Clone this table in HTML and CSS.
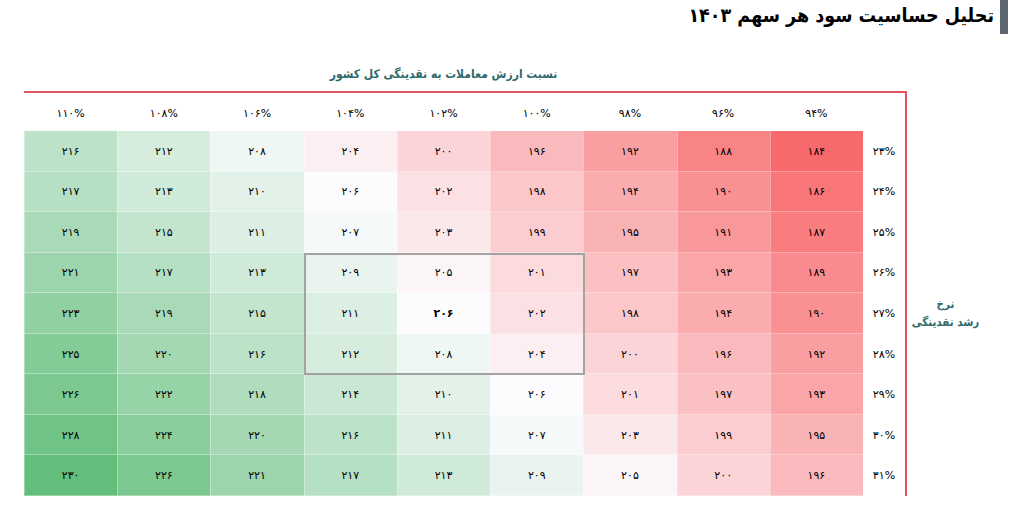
FILE: index.html
```html
<!DOCTYPE html>
<html lang="fa" dir="rtl">
<head>
<meta charset="utf-8">
<title>تحلیل حساسیت سود هر سهم ۱۴۰۳</title>
<link rel="stylesheet" href="styles.css">
</head>
<body>
<header class="page-head">
  <span class="head-bar"></span>
  <h1 class="page-title">تحلیل حساسیت سود هر سهم ۱۴۰۳</h1>
</header>
<main class="sens">
  <div class="axis-y"><span>نرخ</span><span>رشد نقدینگی</span></div>
  <section class="table-wrap">
    <h2 class="axis-x">نسبت ارزش معاملات به نقدینگی کل کشور</h2>
    <div class="grid">
      <div class="corner"></div>
      <div class="colh">۹۴%</div><div class="colh">۹۶%</div><div class="colh">۹۸%</div><div class="colh">۱۰۰%</div><div class="colh">۱۰۲%</div><div class="colh">۱۰۴%</div><div class="colh">۱۰۶%</div><div class="colh">۱۰۸%</div><div class="colh">۱۱۰%</div>

      <div class="rowh">۲۳%</div>
      <div class="cell" data-v="184">۱۸۴</div><div class="cell" data-v="188">۱۸۸</div><div class="cell" data-v="192">۱۹۲</div><div class="cell" data-v="196">۱۹۶</div><div class="cell" data-v="200">۲۰۰</div><div class="cell" data-v="204">۲۰۴</div><div class="cell" data-v="208">۲۰۸</div><div class="cell" data-v="212">۲۱۲</div><div class="cell" data-v="216">۲۱۶</div>

      <div class="rowh">۲۴%</div>
      <div class="cell" data-v="186">۱۸۶</div><div class="cell" data-v="190">۱۹۰</div><div class="cell" data-v="194">۱۹۴</div><div class="cell" data-v="198">۱۹۸</div><div class="cell" data-v="202">۲۰۲</div><div class="cell" data-v="206">۲۰۶</div><div class="cell" data-v="210">۲۱۰</div><div class="cell" data-v="213">۲۱۳</div><div class="cell" data-v="217">۲۱۷</div>

      <div class="rowh">۲۵%</div>
      <div class="cell" data-v="187">۱۸۷</div><div class="cell" data-v="191">۱۹۱</div><div class="cell" data-v="195">۱۹۵</div><div class="cell" data-v="199">۱۹۹</div><div class="cell" data-v="203">۲۰۳</div><div class="cell" data-v="207">۲۰۷</div><div class="cell" data-v="211">۲۱۱</div><div class="cell" data-v="215">۲۱۵</div><div class="cell" data-v="219">۲۱۹</div>

      <div class="rowh">۲۶%</div>
      <div class="cell" data-v="189">۱۸۹</div><div class="cell" data-v="193">۱۹۳</div><div class="cell" data-v="197">۱۹۷</div><div class="cell" data-v="201">۲۰۱</div><div class="cell" data-v="205">۲۰۵</div><div class="cell" data-v="209">۲۰۹</div><div class="cell" data-v="213">۲۱۳</div><div class="cell" data-v="217">۲۱۷</div><div class="cell" data-v="221">۲۲۱</div>

      <div class="rowh">۲۷%</div>
      <div class="cell" data-v="190">۱۹۰</div><div class="cell" data-v="194">۱۹۴</div><div class="cell" data-v="198">۱۹۸</div><div class="cell" data-v="202">۲۰۲</div><div class="cell base" data-v="206">۲۰۶</div><div class="cell" data-v="211">۲۱۱</div><div class="cell" data-v="215">۲۱۵</div><div class="cell" data-v="219">۲۱۹</div><div class="cell" data-v="223">۲۲۳</div>

      <div class="rowh">۲۸%</div>
      <div class="cell" data-v="192">۱۹۲</div><div class="cell" data-v="196">۱۹۶</div><div class="cell" data-v="200">۲۰۰</div><div class="cell" data-v="204">۲۰۴</div><div class="cell" data-v="208">۲۰۸</div><div class="cell" data-v="212">۲۱۲</div><div class="cell" data-v="216">۲۱۶</div><div class="cell" data-v="220">۲۲۰</div><div class="cell" data-v="225">۲۲۵</div>

      <div class="rowh">۲۹%</div>
      <div class="cell" data-v="193">۱۹۳</div><div class="cell" data-v="197">۱۹۷</div><div class="cell" data-v="201">۲۰۱</div><div class="cell" data-v="206">۲۰۶</div><div class="cell" data-v="210">۲۱۰</div><div class="cell" data-v="214">۲۱۴</div><div class="cell" data-v="218">۲۱۸</div><div class="cell" data-v="222">۲۲۲</div><div class="cell" data-v="226">۲۲۶</div>

      <div class="rowh">۳۰%</div>
      <div class="cell" data-v="195">۱۹۵</div><div class="cell" data-v="199">۱۹۹</div><div class="cell" data-v="203">۲۰۳</div><div class="cell" data-v="207">۲۰۷</div><div class="cell" data-v="211">۲۱۱</div><div class="cell" data-v="216">۲۱۶</div><div class="cell" data-v="220">۲۲۰</div><div class="cell" data-v="224">۲۲۴</div><div class="cell" data-v="228">۲۲۸</div>

      <div class="rowh">۳۱%</div>
      <div class="cell" data-v="196">۱۹۶</div><div class="cell" data-v="200">۲۰۰</div><div class="cell" data-v="205">۲۰۵</div><div class="cell" data-v="209">۲۰۹</div><div class="cell" data-v="213">۲۱۳</div><div class="cell" data-v="217">۲۱۷</div><div class="cell" data-v="221">۲۲۱</div><div class="cell" data-v="226">۲۲۶</div><div class="cell" data-v="230">۲۳۰</div>

      <div class="focus-box"></div>
    </div>
  </section>
</main>
<script src="script.js"></script>
</body>
</html>
```

FILE: styles.css
```css
* { box-sizing: border-box; }
html, body { margin: 0; padding: 0; background: #fff; }
body {
  width: 1012px;
  height: 514px;
  overflow: hidden;
  font-family: "DejaVu Sans", "Noto Sans", sans-serif;
  color: #111;
}
.page-head {
  display: flex;
  align-items: flex-start;
  gap: 6px;
  height: 35px;
  padding-right: 4px;
}
.head-bar {
  width: 8px;
  height: 34px;
  background: #5c6670;
  flex: none;
}
.page-title {
  margin: 0;
  font-family: "DejaVu Sans Condensed", "DejaVu Sans", sans-serif;
  font-size: 19.5px;
  font-weight: bold;
  line-height: 31px;
  color: #000;
}
.sens {
  display: flex;
  align-items: flex-start;
}
.axis-y {
  width: 105px;
  flex: none;
  padding-right: 28px;
  margin-top: 260px;
  display: flex;
  flex-direction: column;
  align-items: center;
  white-space: nowrap;
  color: #2f6b6e;
  font-family: "DejaVu Sans Condensed", "DejaVu Sans", sans-serif;
  font-weight: bold;
  font-size: 11.5px;
  line-height: 18px;
}
.table-wrap {
  width: 883px;
  flex: none;
}
.axis-x {
  margin: 29px 0 6px;
  padding-right: 44px;
  text-align: center;
  font-family: "DejaVu Sans Condensed", "DejaVu Sans", sans-serif;
  font-size: 12px;
  font-weight: bold;
  line-height: 21px;
  color: #2f6b6e;
}
.grid {
  position: relative;
  display: grid;
  grid-template-columns: 42px repeat(9, 1fr);
  grid-template-rows: 38px repeat(9, 1fr);
  height: 405px;
  border-top: 2px solid #e0575b;
  border-right: 2px solid #e0575b;
}
.colh, .rowh, .cell {
  display: flex;
  align-items: center;
  justify-content: center;
  font-size: 11px;
  color: #000;
}
.colh { padding-top: 2px; }
.cell {
  box-shadow: inset 1px -1px 0 rgba(255, 255, 255, 0.35);
}
.cell.base { font-weight: bold; }
.focus-box {
  position: absolute;
  inset: 0 -2px -1px 0;
  grid-column: 5 / 8;
  grid-row: 5 / 8;
  border: 2px solid #a3a3a3;
  pointer-events: none;
}
```

FILE: script.js
```js
(function () {
  var min = 184, mid = 206, max = 230;
  var red = [248, 105, 107], white = [252, 252, 255], green = [99, 190, 123];
  function mix(a, b, t) {
    return a.map(function (x, i) { return Math.round(x + (b[i] - x) * t); });
  }
  document.querySelectorAll('.cell[data-v]').forEach(function (c) {
    var v = +c.getAttribute('data-v');
    var col = v <= mid ? mix(red, white, (v - min) / (mid - min)) : mix(white, green, (v - mid) / (max - mid));
    c.style.background = 'rgb(' + col.join(',') + ')';
  });
})();
```
